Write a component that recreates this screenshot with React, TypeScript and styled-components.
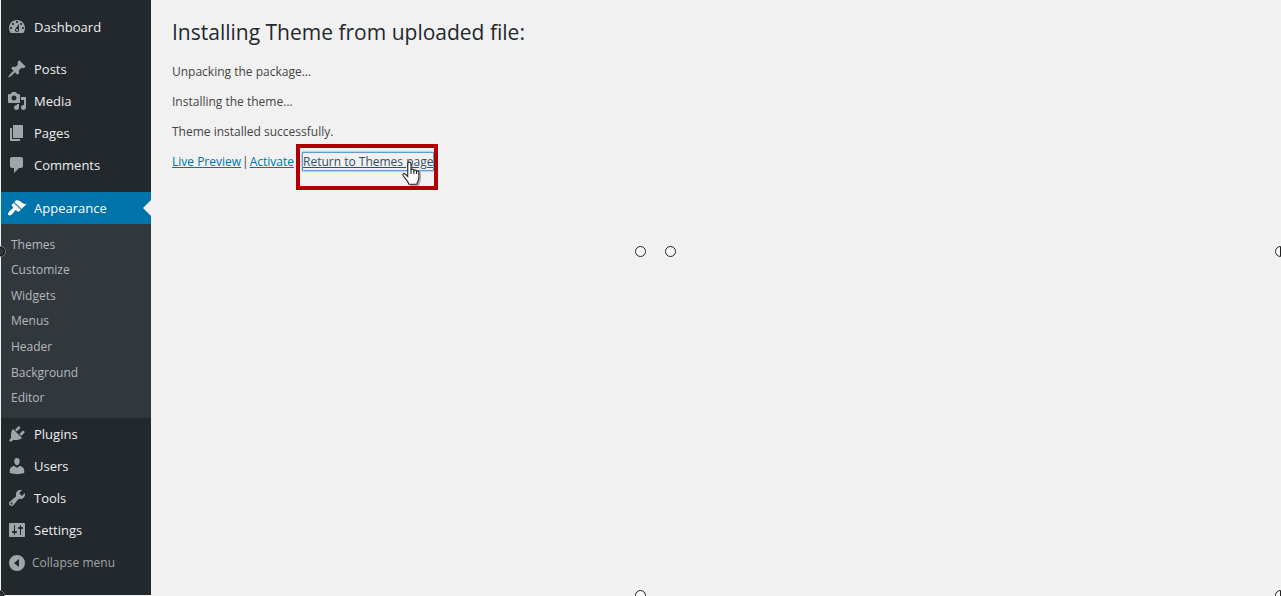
import React from "react";
import styled, { createGlobalStyle } from "styled-components";

const GlobalStyle = createGlobalStyle`
  *, *::before, *::after { box-sizing: border-box; }
  body {
    margin: 0;
    background: #f1f1f1;
    color: #444;
    font-family: "Open Sans", "Noto Sans", sans-serif;
    font-size: 12px;
    line-height: 18px;
  }
`;

const Screen = styled.div`
  position: relative;
  display: flex;
  min-height: 100vh;
  padding: 0 0 1px 1px;
  overflow: hidden;
`;

const Sidebar = styled.nav`
  flex: 0 0 150px;
  padding-top: 11px;
  background: #23282d;
`;

const MenuGroup = styled.ul`
  margin: 0 0 10px;
  padding: 0;
  list-style: none;

  & + & {
    margin-bottom: 11px;
  }
`;

const MenuLink = styled.a<{ $active?: boolean }>`
  position: relative;
  display: flex;
  align-items: center;
  gap: 7px;
  height: 32px;
  padding-left: 6px;
  background: ${(p) => (p.$active ? "#0073aa" : "transparent")};
  color: ${(p) => (p.$active ? "#fff" : "#eee")};
  font-size: 13px;
  font-weight: 500;
  text-decoration: none;

  &::after {
    content: "";
    display: ${(p) => (p.$active ? "block" : "none")};
    position: absolute;
    right: 0;
    top: 8px;
    border: 8px solid transparent;
    border-left-width: 0;
    border-right-color: #f1f1f1;
  }
`;

const MenuIcon = styled.svg<{ $active?: boolean }>`
  flex: none;
  width: 20px;
  height: 20px;
  fill: ${(p) => (p.$active ? "#fff" : "#a0a5aa")};
`;

const Submenu = styled.ul`
  display: grid;
  grid-auto-rows: 1fr;
  align-items: center;
  min-height: 194px;
  margin: 0;
  padding: 8px 10px 7px;
  background: #32373c;
  list-style: none;
`;

const SubmenuLink = styled.a`
  color: #b4b9be;
  text-decoration: none;
`;

const CollapseButton = styled.button`
  display: flex;
  align-items: center;
  gap: 5px;
  height: 34px;
  padding: 0 0 0 6px;
  border: 0;
  background: none;
  color: #a0a5aa;
  font: inherit;
`;

const Content = styled.main`
  flex: 1;
  padding: 17px 20px 0 21px;
`;

const Title = styled.h1`
  margin: 0 0 16px;
  color: #23282d;
  font-size: 21px;
  font-weight: 400;
  line-height: 30px;
`;

const Line = styled.p`
  margin: 0 0 12px;
`;

const Actions = styled.div`
  display: flex;
  gap: 1px;
`;

const Link = styled.a`
  color: #0073aa;
`;

const Highlight = styled.span`
  position: relative;
  margin-left: 8px;

  &::after {
    content: "";
    position: absolute;
    inset: -9px -5px -19px -7px;
    border: 4px solid #b00005;
  }
`;

const FocusedLink = styled.a`
  color: #32506a;
  outline: 1px solid #5b9dd9;
  box-shadow: 0 0 2px 1px #5b9dd9;
`;

const Pointer = styled.svg`
  position: absolute;
  z-index: 1;
  right: 11px;
  top: 8px;
  width: 22px;
  height: 26px;
`;

const Handle = styled.span<{ $left: string; $top: string }>`
  position: absolute;
  left: ${(p) => p.$left};
  top: ${(p) => p.$top};
  width: 11px;
  height: 11px;
  margin: -5px 0 0 -6px;
  border: 1px solid #222;
  border-radius: 50%;
  background: #f6f6f6;
`;

const DarkHandle = styled(Handle)`
  border-color: #777;
  outline: 1px solid #111;
  outline-offset: -2px;
  background: #32373c;
`;

const SplitHandle = styled(Handle)`
  background: linear-gradient(90deg, #f6f6f6 4px, #222 4px, #222 5px, #f6f6f6 5px);
`;

const paths = {
  dashboard:
    "M3.76 16h12.48c1.1-1.37 1.76-3.11 1.76-5 0-4.42-3.58-8-8-8s-8 3.58-8 8c0 1.89.66 3.63 1.76 5zM10 4c.55 0 1 .45 1 1s-.45 1-1 1-1-.45-1-1 .45-1 1-1zM6 6c.55 0 1 .45 1 1s-.45 1-1 1-1-.45-1-1 .45-1 1-1zm8 0c.55 0 1 .45 1 1s-.45 1-1 1-1-.45-1-1 .45-1 1-1zm-5.37 5.55L12 7v6c0 1.1-.9 2-2 2s-2-.9-2-2c0-.57.24-1.08.63-1.45zM4 10c.55 0 1 .45 1 1s-.45 1-1 1-1-.45-1-1 .45-1 1-1zm12 0c.55 0 1 .45 1 1s-.45 1-1 1-1-.45-1-1 .45-1 1-1zm-5 3c0-.55-.45-1-1-1s-1 .45-1 1 .45 1 1 1 1-.45 1-1z",
  posts:
    "M10.44 3.02l1.82-1.82 6.36 6.35-1.83 1.82c-1.05-.68-2.48-.57-3.41.36l-.75.75c-.92.93-1.04 2.35-.35 3.41l-1.83 1.82-2.41-2.41-2.8 2.79c-.42.42-3.38 2.71-3.8 2.29s1.86-3.39 2.28-3.81l2.79-2.79L4.1 9.36l1.83-1.82c1.05.69 2.48.57 3.4-.36l.75-.75c.93-.92 1.05-2.35.36-3.41z",
  media:
    "M13 11V4c0-.55-.45-1-1-1h-1.67L9 1H5L3.67 3H2c-.55 0-1 .45-1 1v7c0 .55.45 1 1 1h10c.55 0 1-.45 1-1zM7 4.5c1.38 0 2.5 1.12 2.5 2.5S8.38 9.5 7 9.5 4.5 8.38 4.5 7 5.62 4.5 7 4.5zM14 6h5v10.5c0 1.38-1.12 2.5-2.5 2.5S14 17.88 14 16.5s1.12-2.5 2.5-2.5c.17 0 .34.02.5.05V9h-3V6zm-4 8.05V13h2v3.5c0 1.38-1.12 2.5-2.5 2.5S7 17.88 7 16.5 8.12 14 9.5 14c.17 0 .34.02.5.05z",
  pages: "M6 15V2h10v13H6zm-1 1h8v2H3V5h2v11z",
  comments:
    "M5 2h9c1.1 0 2 .9 2 2v7c0 1.1-.9 2-2 2h-2l-5 5v-5H5c-1.1 0-2-.9-2-2V4c0-1.1.9-2 2-2z",
  appearance:
    "M14.48 11.06L7.41 3.99l1.5-1.5c.5-.56 2.3-.47 3.51.32 1.21.8 1.43 1.28 2.91 2.1 1.18.64 2.45 1.26 4.45.85zm-.71.71L6.7 4.7 4.93 6.47c-.39.39-.39 1.02 0 1.41l1.06 1.06c.39.39.39 1.03 0 1.42-.6.6-1.43 1.11-2.21 1.69-.35.26-.7.53-1.01.84C1.43 14.23.4 16.08 1.4 17.07c.99 1 2.84-.03 4.18-1.36.31-.31.58-.66.85-1.02.57-.78 1.08-1.61 1.69-2.21.39-.39 1.02-.39 1.41 0l1.06 1.06c.39.39 1.02.39 1.41 0z",
  plugins:
    "M13.11 4.36L9.87 7.6 8 5.73l3.24-3.24c.35-.34 1.05-.2 1.56.32.52.51.66 1.21.31 1.55zm-8 1.77l.91-1.12 9.01 9.01-1.19.84c-.71.71-2.63 1.16-3.82 1.16H6.14L4.9 17.26c-.59.59-1.54.59-2.12 0-.59-.58-.59-1.53 0-2.12l1.24-1.24v-3.88c0-1.13.4-3.19 1.09-3.89zm7.26 3.97l3.24-3.24c.34-.35 1.04-.21 1.55.31.52.51.66 1.21.31 1.55l-3.24 3.25z",
  users:
    "M10 9.25c-2.27 0-2.73-3.44-2.73-3.44C7 4.02 7.82 2 9.97 2c2.16 0 2.98 2.02 2.71 3.81 0 0-.41 3.44-2.68 3.44zm0 2.57L12.72 10c2.39 0 4.52 2.33 4.52 4.53v2.49s-3.65 1.13-7.24 1.13c-3.65 0-7.24-1.13-7.24-1.13v-2.49c0-2.25 1.94-4.48 4.47-4.48z",
  tools:
    "M16.68 9.77c-1.34 1.34-3.3 1.67-4.95.99l-5.41 6.52c-.99.99-2.59.99-3.58 0s-.99-2.59 0-3.57l6.52-5.42c-.68-1.65-.35-3.61.99-4.95 1.28-1.28 3.12-1.62 4.72-1.06l-2.89 2.89 2.82 2.82 2.86-2.87c.53 1.58.18 3.39-1.08 4.65zM3.81 16.21c.4.39 1.04.39 1.43 0 .4-.4.4-1.04 0-1.43-.39-.4-1.03-.4-1.43 0-.39.39-.39 1.03 0 1.43z",
  settings:
    "M18 16V4c0-.55-.45-1-1-1H3c-.55 0-1 .45-1 1v12c0 .55.45 1 1 1h14c.55 0 1-.45 1-1zM8 11h1c.55 0 1 .45 1 1s-.45 1-1 1H8v1.5c0 .28-.22.5-.5.5s-.5-.22-.5-.5V13H6c-.55 0-1-.45-1-1s.45-1 1-1h1V5.5c0-.28.22-.5.5-.5s.5.22.5.5V11zm5-2h-1c-.55 0-1-.45-1-1s.45-1 1-1h1V5.5c0-.28.22-.5.5-.5s.5.22.5.5V7h1c.55 0 1 .45 1 1s-.45 1-1 1h-1v5.5c0 .28-.22.5-.5.5s-.5-.22-.5-.5V9z",
  collapse: "M10 2a8 8 0 100 16 8 8 0 000-16zM12 14L7 10l5-4z",
};

type IconName = keyof typeof paths;

function Icon({ name, active }: { name: IconName; active?: boolean }) {
  return (
    <MenuIcon viewBox="0 0 20 20" $active={active} aria-hidden="true">
      <path d={paths[name]} fillRule="evenodd" />
    </MenuIcon>
  );
}

function MenuItem({ icon, label, active, children }: {
  icon: IconName;
  label: string;
  active?: boolean;
  children?: React.ReactNode;
}) {
  return (
    <li>
      <MenuLink href="#" $active={active}>
        <Icon name={icon} active={active} />
        {label}
      </MenuLink>
      {children}
    </li>
  );
}

const appearancePages = ["Themes", "Customize", "Widgets", "Menus", "Header", "Background", "Editor"];

export default function App() {
  return (
    <>
      <GlobalStyle />
      <Screen>
        <Sidebar>
          <MenuGroup>
            <MenuItem icon="dashboard" label="Dashboard" />
          </MenuGroup>
          <MenuGroup>
            <MenuItem icon="posts" label="Posts" />
            <MenuItem icon="media" label="Media" />
            <MenuItem icon="pages" label="Pages" />
            <MenuItem icon="comments" label="Comments" />
          </MenuGroup>
          <MenuGroup>
            <MenuItem icon="appearance" label="Appearance" active>
              <Submenu>
                {appearancePages.map((page) => (
                  <li key={page}>
                    <SubmenuLink href="#">{page}</SubmenuLink>
                  </li>
                ))}
              </Submenu>
            </MenuItem>
            <MenuItem icon="plugins" label="Plugins" />
            <MenuItem icon="users" label="Users" />
            <MenuItem icon="tools" label="Tools" />
            <MenuItem icon="settings" label="Settings" />
            <li>
              <CollapseButton type="button">
                <Icon name="collapse" />
                Collapse menu
              </CollapseButton>
            </li>
          </MenuGroup>
        </Sidebar>
        <Content>
          <Title>Installing Theme from uploaded file:</Title>
          <Line>Unpacking the package…</Line>
          <Line>Installing the theme…</Line>
          <Line>Theme installed successfully.</Line>
          <Actions>
            <Link href="#">Live Preview</Link>
            <span>|</span>
            <Link href="#">Activate</Link>
            <Highlight>
              <FocusedLink href="#">Return to Themes page</FocusedLink>
              <Pointer viewBox="0 0 20 24" aria-hidden="true">
                <path
                  d="M8 2.5c0-2 3-2 3 0v6c.4-1.3 2.6-1 2.7.4.5-.9 2.4-.6 2.5.7.6-.7 2.1-.3 2.1 1v5c0 3-1.5 4-2 6.4H8.5c-.8-3-3.5-5.2-5.2-8-.7-1.5 1-2.3 2.2-1.1L8 15z"
                  transform="translate(1 1)"
                  fill="#777"
                  opacity="0.5"
                />
                <path
                  d="M7 2.5c0-2 3-2 3 0v6c.4-1.3 2.6-1 2.7.4.5-.9 2.4-.6 2.5.7.6-.7 2.1-.3 2.1 1v4.5c0 3-1.5 4-2 6.3H8c-.8-3-3.5-5-5.3-8-.7-1.5 1-2.3 2.3-1.1l2 2z"
                  fill="#fff"
                  stroke="#222"
                />
                <path d="M10 8v4M12.7 9v3M15.2 10v2" stroke="#222" fill="none" />
              </Pointer>
            </Highlight>
          </Actions>
        </Content>
        <DarkHandle $left="1px" $top="251px" />
        <Handle $left="50%" $top="251px" />
        <Handle $left="calc(50% + 30px)" $top="251px" />
        <SplitHandle $left="100%" $top="251px" />
        <DarkHandle $left="0px" $top="calc(100% - 1px)" />
        <Handle $left="50%" $top="calc(100% - 1px)" />
        <SplitHandle $left="100%" $top="calc(100% - 1px)" />
      </Screen>
    </>
  );
}
